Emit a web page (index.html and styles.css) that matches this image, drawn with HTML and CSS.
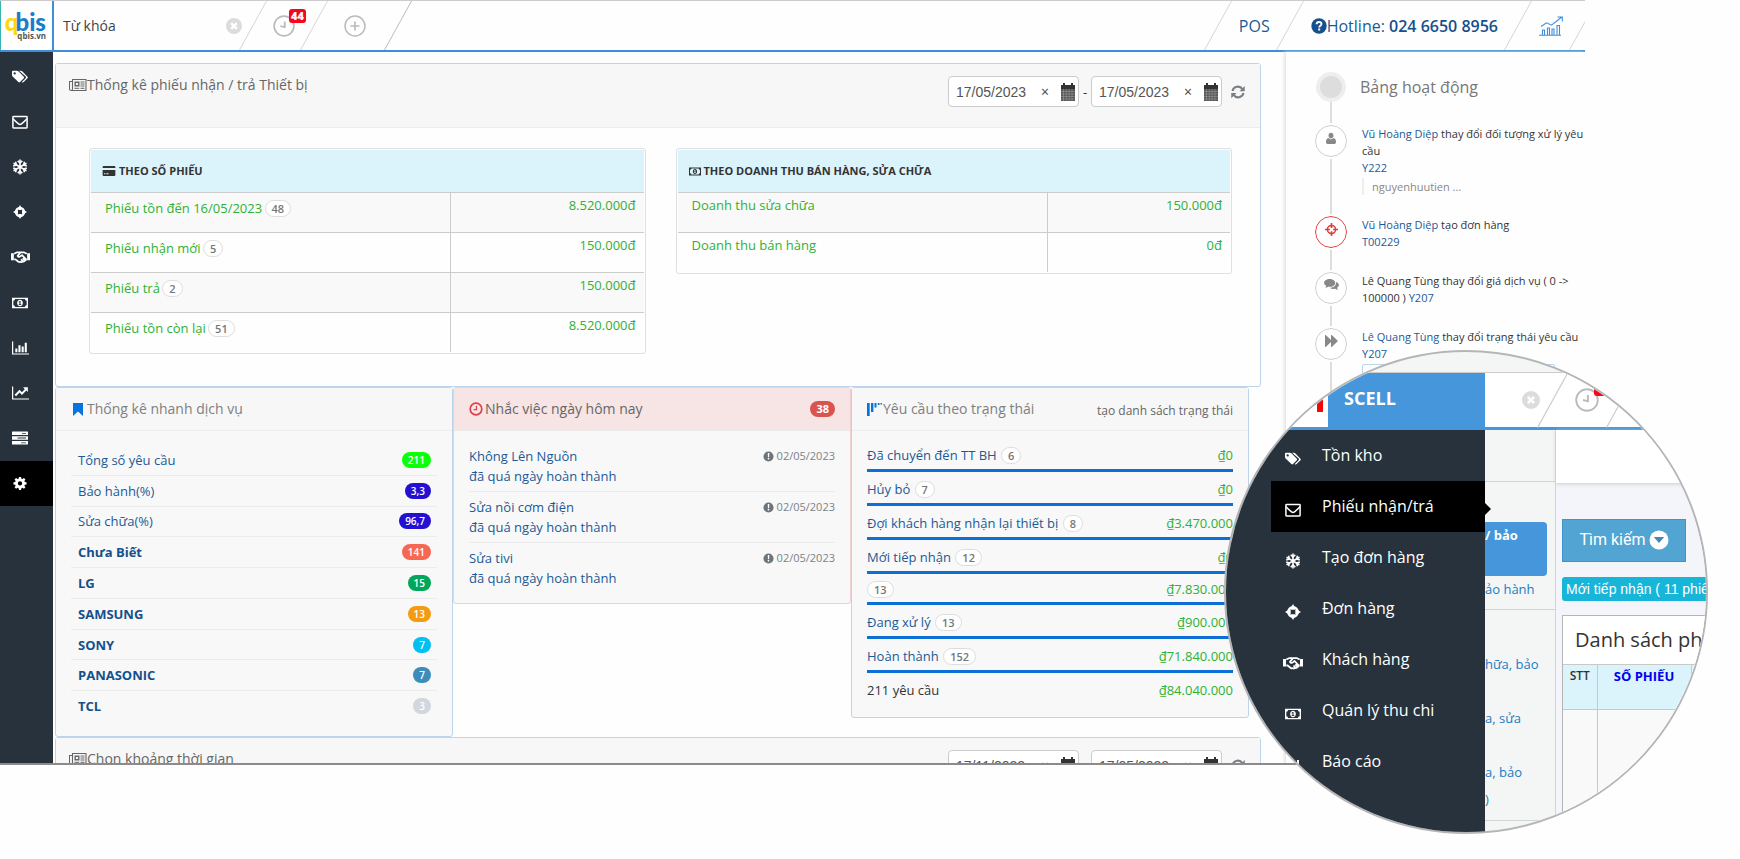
FILE: index.html
```html
<!DOCTYPE html>
<html lang="vi">
<head>
<meta charset="utf-8">
<title>Qbis</title>
<link rel="stylesheet" href="styles.css">
</head>
<body>
<svg class="defs" aria-hidden="true">
  <symbol id="i-tags" viewBox="0 0 18 16"><path fill="currentColor" fill-rule="evenodd" d="M0 2.200C0 1.500.5 1 1.200 1h4.300c.7 0 1.500.300 2 .8l5.800 5.800c.6.6.6 1.200 0 1.800l-4.300 4.300c-.6.6-1.200.6-1.800 0L1 7.800C.4 7.200 0 6.500 0 5.800zM3 2.700a1.300 1.300 0 1 0 0 2.600 1.300 1.300 0 0 0 0-2.600z"/><path fill="currentColor" d="M8 1h1.800c.7 0 1.500.3 2 .8l5.600 5.800c.6.6.6 1.200 0 1.800l-4.300 4.300c-.6.6-1.700.8-2.300.2l4.600-4.500c.5-.6.5-1.300 0-1.900z"/></symbol>
  <symbol id="i-mail" viewBox="0 0 16 16"><rect x=".9" y="2.400" width="14.200" height="11.500" rx=".6" fill="none" stroke="currentColor" stroke-width="1.500"/><path d="M1 4.800c2 2.200 4 3.800 5.500 5 1 .8 2 .8 3 0 1.500-1.200 3.500-2.800 5.500-5" fill="none" stroke="currentColor" stroke-width="1.500"/></symbol>
  <symbol id="i-snow" viewBox="0 0 16 16"><g fill="none" stroke="currentColor" stroke-width="1.600"><path d="M8 .5v15M1.500 4.250l13 7.500M14.500 4.250l-13 7.500"/><path d="M5.700 1.800L8 3.900l2.300-2.100M5.700 14.200L8 12.100l2.300 2.100M1.200 7l3.200-1-.9-3.200M14.800 7l-3.200-1 .9-3.200M1.200 9l3.200 1-.9 3.200M14.800 9l-3.200 1 .9 3.200"/></g></symbol>
  <symbol id="i-target" viewBox="0 0 16 16"><circle cx="8" cy="8" r="4.600" fill="none" stroke="currentColor" stroke-width="2.600"/><path fill="currentColor" d="M8 0l1.900 3.300v2.400H6.100V3.300zM8 16l1.900-3.300v-2.400H6.100v2.400zM0 8l3.300-1.900h2.400v3.800H3.300zM16 8l-3.300-1.900h-2.400v3.800h2.400z"/></symbol>
  <symbol id="i-cross" viewBox="0 0 16 16"><circle cx="8" cy="8" r="5" fill="none" stroke="currentColor" stroke-width="1.800"/><path fill="currentColor" d="M7 0h2v6H7zM7 10h2v6H7zM0 7h6v2H0zM10 7h6v2h-6z"/></symbol>
  <symbol id="i-hands" viewBox="0 0 20 14"><path fill="currentColor" d="M0 3h3v7.500H0zM17 3h3v7.500h-3z"/><path fill="none" stroke="currentColor" stroke-width="1.800" stroke-linejoin="round" d="M3.300 3.500L6 2.200h4L7 5.800c.7 1.600 2.400 1.400 3.600-.1l1-.7 4 4.300c.5.700-.3 1.700-1.100 1.200l-.5.900c-.5.700-1.300.6-1.700.2-.5 1-1.500 1.200-2.300.5-.9.600-1.800.3-2.600-.4L4.700 9.500H3.300M10 2.200h4l2.700 1.300M16.700 9.500h-1.500M10.500 9.500l1.800 2M12.300 8.300l1.700 2"/></symbol>
  <symbol id="i-money" viewBox="0 0 18 12"><path fill="currentColor" fill-rule="evenodd" d="M0 0h18v12H0zM3.500 1.500A2 2 0 0 1 1.500 3.500v5a2 2 0 0 1 2 2h11a2 2 0 0 1 2-2v-5a2 2 0 0 1-2-2z"/><path fill="currentColor" fill-rule="evenodd" d="M9 2.300c2 0 3.200 1.700 3.200 3.700S11 9.700 9 9.700 5.800 8 5.800 6 7 2.300 9 2.300zM8.500 3.700L7.300 4.800l.5.600.6-.4v2.500h-.9v.8h3v-.8h-.9V3.700z"/></symbol>
  <symbol id="i-bars" viewBox="0 0 18 14"><path fill="currentColor" d="M0 0h1.300v12.700H18V14H0zM3.500 7.500h2.200v4H3.500zM6.800 4h2.200v7.500H6.800zM10.200 5.500h2.200v6h-2.200zM13.500 1.500h2.200v10h-2.200z"/></symbol>
  <symbol id="i-line" viewBox="0 0 18 14"><path fill="currentColor" d="M0 0h1.300v12.700H18V14H0zM11.800 1h5v5l-1.600-1.600-4.700 4.700-2.500-2.500-3.700 3.900L2.700 8.900 8 3.600 10.500 6.100l3-3.200z"/></symbol>
  <symbol id="i-server" viewBox="0 0 16 13"><path fill="currentColor" fill-rule="evenodd" d="M.5 0h15c.3 0 .5.200.5.500v3H0v-3C0 .2.200 0 .5 0zM10 1.500v.8h4v-.8zM0 4.700h16v3.600H0zM5.500 6.100v.8H14v-.8zM0 9.500h16v3c0 .3-.2.500-.5.500H.5a.5.5 0 0 1-.5-.5zM9 10.900v.8h5v-.8z"/></symbol>
  <symbol id="i-cog" viewBox="0 0 16 16"><path fill="currentColor" fill-rule="evenodd" d="M6.800 1h2.400l.4 2 1.200.5 1.700-1.200 1.700 1.700L13 5.700l.5 1.200 2 .3v2.400l-2 .4-.5 1.200 1.200 1.700-1.700 1.700-1.700-1.200-1.200.5-.4 2H6.800l-.4-2-1.200-.5-1.700 1.200-1.700-1.700L3 11.200 2.500 10l-2-.4V7.200l2-.3L3 5.700 1.800 4l1.700-1.700 1.700 1.200L6.400 3zM8 5.900a2.500 2.500 0 1 0 0 5 2.500 2.500 0 0 0 0-5z"/></symbol>
  <symbol id="i-times" viewBox="0 0 16 16"><circle cx="8" cy="8" r="8" fill="currentColor"/><path d="M5.200 5.200l5.600 5.600M10.800 5.200l-5.600 5.600" stroke="#fff" stroke-width="2.400"/></symbol>
  <symbol id="i-clock" viewBox="0 0 22 22"><g fill="none" stroke="currentColor"><circle cx="11" cy="11" r="9.900" stroke-width="1.700"/><path d="M11.800 6.500v6.500M12.300 12.300l-5-1.300" stroke-width="1.800"/></g></symbol>
  <symbol id="i-plus" viewBox="0 0 22 22"><g fill="none" stroke="currentColor" stroke-width="1.500"><circle cx="11" cy="11" r="10"/><path d="M11 6.500v9M6.500 11h9" stroke-width="1.700"/></g></symbol>
  <symbol id="i-slash" viewBox="0 0 28 49"><path d="M27.500 0L.5 49" stroke="currentColor" fill="none"/></symbol>
  <symbol id="i-help" viewBox="0 0 16 16"><circle cx="8" cy="8" r="7.700" fill="currentColor"/><path d="M5.600 6.200C5.700 4.600 6.700 4 8 4c1.500 0 2.500.8 2.500 2 0 1.800-2.300 1.700-2.300 3.400" fill="none" stroke="#fff" stroke-width="1.900"/><path fill="#fff" d="M7.200 10.500h2v2h-2z"/></symbol>
  <symbol id="i-growth" viewBox="0 0 24 20"><g fill="none" stroke="currentColor" stroke-width="1.100"><path d="M0 19.300h22M3.500 19v-5h2v5M8.500 19v-7h2v7M13 19v-6h2v6M18 19V9.500h2.500V19"/><path d="M2 10.500l5.500-3.700 5 2.400L22.500 1.200M18.500 1h4.800v4.500"/></g></symbol>
  <symbol id="i-news" viewBox="0 0 18 14"><g fill="none" stroke="currentColor"><path d="M3.500 1.500h13.500v11H2c-1 0-1.500-.5-1.500-1.500V3.500h3zM3.500 3.500V11c0 1-.6 1.500-1.500 1.500" stroke-width="1.100"/><path d="M6.200 4.200h3.600v3.600H6.200z" stroke-width="1.400"/><path d="M11.500 4h4M11.500 6h4M11.500 8h4M5.500 10.300h4.800M11.500 10.300h4" stroke-width="1"/></g></symbol>
  <symbol id="i-card" viewBox="0 0 14 11"><path fill="currentColor" fill-rule="evenodd" d="M1 0h12c.6 0 1 .4 1 1v1.200H0V1c0-.6.4-1 1-1zM0 4.500h14V10c0 .6-.4 1-1 1H1c-.6 0-1-.4-1-1zM1.500 8v1h1.500V8zM4 8v1h2.500V8z"/></symbol>
  <symbol id="i-cal" viewBox="0 0 16 18"><path fill="#333" d="M3 0h2v2h6V0h2v2h2v4H1V2h2z"/><path fill="#555" d="M1 6h14v12H1z"/><path d="M1 8.500h14M1 11h14M1 13.500h14M1 16h14M3.500 6v12M6.300 6v12M9.100 6v12M12 6v12" stroke="#999" stroke-width=".6"/></symbol>
  <symbol id="i-refresh" viewBox="0 0 16 16"><g fill="none" stroke="currentColor" stroke-width="2.400"><path d="M1.700 6.800A6.300 6.300 0 0 1 13 4.600M14.300 9.200A6.300 6.300 0 0 1 3 11.400"/></g><path fill="currentColor" d="M15.700 1v6H9.700zM.3 15V9h6z"/></symbol>
  <symbol id="i-bookmark" viewBox="0 0 10 13"><path fill="currentColor" d="M0 0h10v13L5 8.500 0 13z"/></symbol>
  <symbol id="i-oclock" viewBox="0 0 14 14"><g fill="none" stroke="currentColor"><circle cx="7" cy="7" r="5.800" stroke-width="1.700"/><path d="M7.500 3.700v4H4.700" stroke-width="1.200"/></g></symbol>
  <symbol id="i-alert" viewBox="0 0 12 12"><circle cx="6" cy="6" r="5.500" fill="currentColor"/><path fill="#fff" d="M5.200 2.300h1.700l-.2 4.400H5.400zM5.200 7.700h1.600v1.600H5.200z"/></symbol>
  <symbol id="i-funnel" viewBox="0 0 16 13"><path fill="currentColor" d="M0 0h2.700v13H0zM4 0h2.400v9H4zM7.500 0h2v4.500h-2zM10.800 0h1.700v2h-1.700zM13.500 0H15v1.500h-1.500z"/></symbol>
  <symbol id="i-user" viewBox="0 0 12 14"><path fill="currentColor" d="M6 0c1.700 0 3 1.500 3 3.500S7.700 7 6 7 3 5.500 3 3.500 4.300 0 6 0zM3 6.500c1 1.200 2 1.500 3 1.500s2-.3 3-1.500c2 .3 3 2 3 5 0 1-.8 2-2 2H2c-1.200 0-2-1-2-2 0-3 1-4.700 3-5z"/></symbol>
  <symbol id="i-chat" viewBox="0 0 16 13"><path fill="currentColor" d="M6 0c3.300 0 6 1.800 6 4.200S9.300 8.500 6 8.500c-.6 0-1.200 0-1.700-.2-.9.700-2 1-3 1.100.6-.6 1-1.200 1-2C.9 6.600 0 5.500 0 4.200 0 1.800 2.700 0 6 0z"/><path fill="currentColor" d="M13 3.200c1.800.7 3 1.900 3 3.400 0 1.200-.8 2.200-2 3 .1.900.5 1.500 1.200 2.200-1.200 0-2.300-.5-3.200-1.200-2.300.4-4.500-.1-5.800-1.200 4 0 7-2.200 6.800-6.200z"/></symbol>
  <symbol id="i-fwd" viewBox="0 0 13 12"><path fill="currentColor" d="M0 0l1 .2L6 5V0l1 .2L13 6l-6 5.800L6 12V7l-5 4.800L0 12z"/></symbol>
  <symbol id="i-down" viewBox="0 0 20 20"><circle cx="10" cy="10" r="9.500" fill="#fff"/><path fill="#4a86b5" d="M4.800 7h10.400L10 13z"/></symbol>
</svg>

<div class="app">
  <header class="topbar">
    <a class="logo" href="#"><span class="logo-name"><b>q</b>bis</span><span class="logo-site">qbis.vn</span></a>
    <form class="search">
      <input type="text" aria-label="Từ khóa" placeholder="Từ khóa">
      <button type="reset" aria-label="Xóa"><svg class="ic16"><use href="#i-times"/></svg></button>
    </form>
    <svg class="slash"><use href="#i-slash"/></svg>
    <button class="top-btn top-clock" aria-label="Nhắc việc"><svg class="ic22"><use href="#i-clock"/></svg><span class="count">44</span></button>
    <svg class="slash"><use href="#i-slash"/></svg>
    <button class="top-btn top-plus" aria-label="Thêm"><svg class="ic22"><use href="#i-plus"/></svg></button>
    <svg class="slash slash-dark"><use href="#i-slash"/></svg>
    <div class="spacer"></div>
    <svg class="slash"><use href="#i-slash"/></svg>
    <a class="top-link" href="#">POS</a>
    <svg class="slash"><use href="#i-slash"/></svg>
    <a class="top-link hotline" href="#"><svg class="ic16"><use href="#i-help"/></svg><span>Hotline: <b>024 6650 8956</b></span></a>
    <svg class="slash"><use href="#i-slash"/></svg>
    <a class="top-link growth" href="#" aria-label="Báo cáo"><svg class="ic-growth"><use href="#i-growth"/></svg></a>
    <svg class="slash slash-end"><use href="#i-slash"/></svg>
  </header>

  <div class="body">
    <nav class="side">
      <ul>
        <li><a href="#" aria-label="Tồn kho"><svg><use href="#i-tags"/></svg></a></li>
        <li><a href="#" aria-label="Phiếu"><svg><use href="#i-mail"/></svg></a></li>
        <li><a href="#" aria-label="Tạo đơn"><svg><use href="#i-snow"/></svg></a></li>
        <li><a href="#" aria-label="Đơn hàng"><svg class="small"><use href="#i-target"/></svg></a></li>
        <li><a href="#" aria-label="Khách hàng"><svg class="wide"><use href="#i-hands"/></svg></a></li>
        <li><a href="#" aria-label="Thu chi"><svg><use href="#i-money"/></svg></a></li>
        <li><a href="#" aria-label="Báo cáo"><svg class="chart"><use href="#i-bars"/></svg></a></li>
        <li><a href="#" aria-label="Thống kê"><svg class="chart"><use href="#i-line"/></svg></a></li>
        <li><a href="#" aria-label="Dữ liệu"><svg><use href="#i-server"/></svg></a></li>
        <li class="on"><a href="#" aria-label="Cài đặt"><svg class="small"><use href="#i-cog"/></svg></a></li>
      </ul>
    </nav>

    <main class="main">
      <section class="panel">
        <div class="panel-head tall">
          <h2><svg class="ic-news"><use href="#i-news"/></svg>Thống kê phiếu nhận / trả Thiết bị</h2>
          <div class="range">
            <div class="date"><input type="text" aria-label="Từ ngày" value="17/05/2023"><button aria-label="Xóa ngày">×</button><svg><use href="#i-cal"/></svg></div>
            <span class="dash">-</span>
            <div class="date"><input type="text" aria-label="Đến ngày" value="17/05/2023"><button aria-label="Xóa ngày">×</button><svg><use href="#i-cal"/></svg></div>
            <button class="refresh" aria-label="Tải lại"><svg><use href="#i-refresh"/></svg></button>
          </div>
        </div>
        <div class="tables">
          <div class="frame">
            <table>
              <thead><tr><th colspan="2"><svg class="ic-card"><use href="#i-card"/></svg>THEO SỐ PHIẾU</th></tr></thead>
              <tbody>
                <tr><td class="pilled">Phiếu tồn đến 16/05/2023 <span class="pill">48</span></td><td class="num">8.520.000đ</td></tr>
                <tr><td class="pilled">Phiếu nhận mới <span class="pill">5</span></td><td class="num">150.000đ</td></tr>
                <tr><td class="pilled">Phiếu trả <span class="pill">2</span></td><td class="num">150.000đ</td></tr>
                <tr><td class="pilled">Phiếu tồn còn lại <span class="pill">51</span></td><td class="num">8.520.000đ</td></tr>
              </tbody>
            </table>
          </div>
          <div class="frame">
            <table>
              <thead><tr><th colspan="2"><svg class="ic-cash"><use href="#i-money"/></svg>THEO DOANH THU BÁN HÀNG, SỬA CHỮA</th></tr></thead>
              <tbody>
                <tr><td>Doanh thu sửa chữa</td><td class="num narrow">150.000đ</td></tr>
                <tr><td>Doanh thu bán hàng</td><td class="num narrow">0đ</td></tr>
              </tbody>
            </table>
          </div>
        </div>
      </section>

      <div class="trio">
        <section class="panel gray">
          <div class="panel-head"><h2 class="light"><svg class="ic-mark"><use href="#i-bookmark"/></svg>Thống kê nhanh dịch vụ</h2></div>
          <ul class="quick">
            <li><a href="#">Tổng số yêu cầu</a><span class="tag lime">211</span></li>
            <li><a href="#">Bảo hành(%)</a><span class="tag navy">3,3</span></li>
            <li><a href="#">Sửa chữa(%)</a><span class="tag navy">96,7</span></li>
            <li><a href="#"><b>Chưa Biết</b></a><span class="tag coral">141</span></li>
            <li><a href="#"><b>LG</b></a><span class="tag green">15</span></li>
            <li><a href="#"><b>SAMSUNG</b></a><span class="tag orange">13</span></li>
            <li><a href="#"><b>SONY</b></a><span class="tag cyan">7</span></li>
            <li><a href="#"><b>PANASONIC</b></a><span class="tag blue">7</span></li>
            <li><a href="#"><b>TCL</b></a><span class="tag pale">3</span></li>
          </ul>
        </section>

        <section class="panel gray alert">
          <div class="panel-head"><h2><svg class="ic-oclock"><use href="#i-oclock"/></svg>Nhắc việc ngày hôm nay</h2><span class="tag red">38</span></div>
          <ul class="todo">
            <li><a href="#">Không Lên Nguồn<br>đã quá ngày hoàn thành</a><time><svg><use href="#i-alert"/></svg>02/05/2023</time></li>
            <li><a href="#">Sửa nồi cơm điện<br>đã quá ngày hoàn thành</a><time><svg><use href="#i-alert"/></svg>02/05/2023</time></li>
            <li><a href="#">Sửa tivi<br>đã quá ngày hoàn thành</a><time><svg><use href="#i-alert"/></svg>02/05/2023</time></li>
          </ul>
        </section>

        <section class="panel gray">
          <div class="panel-head"><h2 class="light"><svg class="ic-funnel"><use href="#i-funnel"/></svg>Yêu cầu theo trạng thái</h2><a class="make" href="#">tạo danh sách trạng thái</a></div>
          <ul class="status">
            <li><a href="#">Đã chuyển đến TT BH <span class="pill">6</span></a><span class="num">₫0</span></li>
            <li><a href="#">Hủy bỏ <span class="pill">7</span></a><span class="num">₫0</span></li>
            <li><a href="#">Đợi khách hàng nhận lại thiết bị <span class="pill">8</span></a><span class="num">₫3.470.000</span></li>
            <li><a href="#">Mới tiếp nhận <span class="pill">12</span></a><span class="num">₫0</span></li>
            <li class="bare"><a href="#"><span class="pill">13</span></a><span class="num">₫7.830.000</span></li>
            <li><a href="#">Đang xử lý <span class="pill">13</span></a><span class="num">₫900.000</span></li>
            <li><a href="#">Hoàn thành <span class="pill">152</span></a><span class="num">₫71.840.000</span></li>
            <li class="total"><span>211 yêu cầu</span><span class="num">₫84.040.000</span></li>
          </ul>
        </section>
      </div>

      <section class="panel">
        <div class="panel-head tall">
          <h2><svg class="ic-news"><use href="#i-news"/></svg>Chọn khoảng thời gian</h2>
          <div class="range">
            <div class="date"><input type="text" aria-label="Từ ngày" value="17/11/2022"><button aria-label="Xóa ngày">×</button><svg><use href="#i-cal"/></svg></div>
            <span class="dash">-</span>
            <div class="date"><input type="text" aria-label="Đến ngày" value="17/05/2023"><button aria-label="Xóa ngày">×</button><svg><use href="#i-cal"/></svg></div>
            <button class="refresh" aria-label="Tải lại"><svg><use href="#i-refresh"/></svg></button>
          </div>
        </div>
      </section>
    </main>

    <aside class="feed">
      <h3><span class="dot"></span>Bảng hoạt động</h3>
      <ol>
        <li><span class="node"><svg class="ic-user"><use href="#i-user"/></svg></span><div class="say tall-say"><p><a href="#">Vũ Hoàng Diệp</a> thay đổi đối tượng xử lý yêu cầu<br><a href="#">Y222</a></p><blockquote>nguyenhuutien ...</blockquote></div></li>
        <li><span class="node hot"><svg class="ic-cross"><use href="#i-cross"/></svg></span><div class="say"><p><a href="#">Vũ Hoàng Diệp</a> tạo đơn hàng<br><a href="#">T00229</a></p></div></li>
        <li><span class="node"><svg class="ic-chat"><use href="#i-chat"/></svg></span><div class="say"><p>Lê Quang Tùng thay đổi giá dịch vụ ( 0 -&gt; 100000 ) <a href="#">Y207</a></p></div></li>
        <li><span class="node"><svg class="ic-fwd"><use href="#i-fwd"/></svg></span><div class="say"><p><a href="#">Lê Quang Tùng</a> thay đổi trạng thái yêu cầu <a href="#">Y207</a></p><div class="state"></div></div></li>
      </ol>
    </aside>
  </div>
</div>

<div class="lens">
  <div class="lens-top">
    <span class="lens-logo"></span>
    <strong class="lens-brand">SCELL</strong>
    <svg class="lens-times"><use href="#i-times"/></svg>
    <svg class="lens-slash"><use href="#i-slash"/></svg>
    <span class="lens-clock"><svg><use href="#i-clock"/></svg><i></i></span>
    <svg class="lens-slash"><use href="#i-slash"/></svg>
  </div>
  <div class="lens-body">
    <nav class="lens-nav">
      <a href="#"><svg><use href="#i-tags"/></svg>Tồn kho</a>
      <a class="on" href="#"><svg><use href="#i-mail"/></svg>Phiếu nhận/trá</a>
      <a href="#"><svg><use href="#i-snow"/></svg>Tạo đơn hàng</a>
      <a href="#"><svg><use href="#i-target"/></svg>Đơn hàng</a>
      <a href="#"><svg class="wide"><use href="#i-hands"/></svg>Khách hàng</a>
      <a href="#"><svg><use href="#i-money"/></svg>Quán lý thu chi</a>
      <a href="#"><svg><use href="#i-bars"/></svg>Báo cáo</a>
    </nav>
    <div class="lens-sub">
      <div class="sub-blank"></div>
      <div class="sub-group"><a class="on" href="#">/ bảo</a><a href="#">ảo hành</a></div>
      <div class="sub-group second"><a href="#">hữa, bảo</a><a href="#">a, sửa</a><a href="#">a, bảo<br>)</a></div>
    </div>
    <div class="lens-main">
      <div class="lens-strip"></div>
      <button class="find">Tìm kiếm<svg><use href="#i-down"/></svg></button>
      <span class="fresh">Mới tiếp nhận ( 11 phiếu )</span>
      <div class="slips">
        <h4>Danh sách phiếu</h4>
        <table>
          <tr><th class="stt">STT</th><th class="code">SỐ PHIẾU</th><th></th></tr>
          <tr><td></td><td></td><td></td></tr>
        </table>
      </div>
    </div>
  </div>
</div>
</body>
</html>
```

FILE: styles.css
```css
* { box-sizing: border-box; }
body {
  margin: 0;
  position: relative;
  min-height: 100vh;
  overflow: hidden;
  background: #fefefe;
  color: #333;
  font: 13px/18px "Open Sans", "Noto Sans", sans-serif;
}
a { color: #1b5a96; text-decoration: none; }
ul, ol { list-style: none; margin: 0; padding: 0; }
h2, h3, h4, p, blockquote { margin: 0; font-weight: 400; }
button { border: 0; padding: 0; background: none; font: inherit; cursor: pointer; }
svg { flex: none; }
.defs { position: absolute; width: 0; height: 0; }

.app {
  width: calc(100% - 155px);
  height: calc(100vh - 94px);
  overflow: hidden;
  display: flex;
  flex-direction: column;
  border-top: 1px solid #ccc;
  border-bottom: 2px solid #8d8a8c;
}

/* Top bar */
.topbar {
  display: flex;
  align-items: center;
  flex: none;
  height: 51px;
  border-bottom: 2px solid #3d8fdb;
  overflow: hidden;
}
.logo {
  display: flex;
  flex-direction: column;
  align-items: flex-end;
  justify-content: center;
  width: 54px;
  height: 49px;
  padding-right: 6px;
  border-left: 1px solid #35b5b5;
  border-right: 2px solid #3d8fdb;
}
.logo-name { font: 900 24px/21px Lato, sans-serif; color: #1b7cc9; }
.logo-name b { margin-right: -3px; color: #fbd90d; }
.logo-site { font: 700 8px/8px "Open Sans", sans-serif; color: #555; }
.search { display: flex; align-items: center; width: 188px; }
.search input {
  flex: 1;
  min-width: 0;
  height: 46px;
  padding: 0 9px;
  border: 0;
  background: none;
  font: 14px "Open Sans", sans-serif;
}
.search input::placeholder { color: #444; opacity: 1; }
.search button { display: flex; color: #dcdcdc; }
.ic16 { width: 16px; height: 16px; }
.ic22 { width: 22px; height: 22px; }
.slash { width: 28px; height: 49px; color: #d5d5d5; }
.search + .slash { margin-left: -3px; }
.slash-dark { color: #bbb; }
.slash-end { margin-right: -12px; }
.top-btn { position: relative; display: flex; justify-content: center; color: #bbb; }
.top-clock { width: 33px; }
.top-plus { width: 56px; }
.top-plus svg { margin-right: 2px; }
.count {
  position: absolute;
  left: 22px;
  top: -6px;
  padding: 0 2px;
  border-radius: 3px;
  background: #f8071c;
  color: #fff;
  font: 800 11px/14px "Open Sans", sans-serif;
}
.spacer { flex: 1; }
.top-link { display: flex; align-items: center; padding: 0 6px 0 7px; font-size: 16px; }
.hotline b { color: #15508c; font-weight: 600; }
.hotline .ic16 { color: #15508c; }
.growth { color: #3d8fdb; }
.ic-growth { width: 24px; height: 20px; }

.body { display: flex; flex: 1; min-height: 0; }

/* Side bar */
.side { width: 53px; background: #28323c; flex: none; }
.side ul { display: flex; flex-direction: column; height: 454px; padding-top: 2px; }
.side li { flex: 1; display: flex; }
.side a { flex: 1; display: flex; align-items: center; justify-content: center; padding-right: 13px; color: #fff; }
.side svg { width: 16px; height: 16px; }
.side .small { width: 14px; height: 14px; }
.side .chart { width: 17px; }
.side .wide { width: 19px; }
.side .on { background: #000; }

/* Panels */
.main { flex: 1; min-width: 0; padding: 11px 24px 0 2px; }
.panel { border: 1px solid #bcd4ec; border-radius: 3px; }
.gray { background: #f8f8f8; }
.panel-head {
  display: flex;
  justify-content: space-between;
  align-items: center;
  min-height: 43px;
  padding: 0 15px;
  border-bottom: 1px solid #ececec;
  background: #f7f7f7;
}
.panel-head.tall { align-items: flex-start; padding: 12px 15px 20px 13px; }
h2 { display: flex; align-items: center; font-size: 14px; line-height: 18px; color: #666; }
h2.light { color: #808080; }
.ic-news { width: 18px; height: 14px; }
.ic-mark { width: 10px; height: 13px; margin: 0 4px 0 2px; color: #0773de; }
.ic-oclock { width: 14px; height: 14px; margin-right: 2px; color: #d9424a; }
.ic-funnel { width: 16px; height: 13px; color: #0773de; }
.range { display: flex; align-items: center; }
.date {
  display: flex;
  align-items: center;
  width: 131px;
  height: 31px;
  padding: 0 2px 0 7px;
  border: 1px solid #ccc;
  border-radius: 4px;
  background: #fff;
}
.date input { flex: 1; min-width: 0; padding: 0; border: 0; font: 14px "Liberation Sans", sans-serif; color: #555; }
.date button { width: 16px; margin-right: 7px; font-size: 14px; color: #444; }
.date svg { width: 16px; height: 18px; }
.dash { width: 12px; text-align: center; }
.refresh { display: flex; margin-left: 9px; color: #777f85; }
.refresh svg { width: 14px; height: 14px; }

.tables { display: grid; grid-template-columns: 1fr 1fr; gap: 30px; align-items: start; padding: 20px 28px 32px 33px; }
.frame { padding: 1px; border: 1px solid #e0e0e0; border-radius: 3px; }
.frame table { width: 100%; border-collapse: collapse; }
.frame th {
  height: 42px;
  padding: 0 11px;
  background: #dbf4fc;
  text-align: left;
  font-size: 11px;
  font-weight: 700;
}
.frame th svg { vertical-align: -1px; margin-right: 3px; }
.ic-card { width: 14px; height: 10px; }
.ic-cash { width: 12px; height: 9px; }
.frame td { height: 40px; padding: 3px 8px 0 14px; vertical-align: top; border-top: 1px solid #ccc; color: #2eb135; }
.frame td.pilled { padding-top: 6px; }
.frame td.num { width: 35%; border-left: 1px solid #ccc; text-align: right; }
.frame td.narrow { width: 33%; }
.frame tbody tr:nth-child(odd) { background: #f9f9f9; }
.pill {
  display: inline-block;
  padding: 0 6px;
  border: 1px solid #ddd;
  border-radius: 9px;
  background: #fff;
  color: #777;
  font-size: 11px;
  font-weight: 600;
  line-height: 15px;
}
.pilled .pill { margin-left: -1px; }

.trio { display: flex; align-items: flex-start; padding-right: 12px; }
.trio .panel { flex: 1; min-width: 0; }
.quick { display: flex; flex-direction: column; min-height: 305px; padding: 14px 15px 15px; }
.quick li { flex: 1; display: flex; justify-content: space-between; align-items: center; padding: 0 6px 0 7px; border-bottom: 1px solid #ececec; }
.quick li:last-child { border: 0; }
.quick b { color: #15508c; font-weight: 700; }
.tag { padding: 0 6px; border-radius: 8px; color: #fff; font-size: 10px; font-weight: 600; line-height: 16px; }
.lime { background: #0bff0b; }
.navy { background: #2410d0; }
.coral { background: #f56954; }
.green { background: #00a65a; }
.orange { background: #f39c12; }
.cyan { background: #00c0ef; }
.blue { background: #3c8dbc; }
.pale { background: #d2d6de; }
.red { background: #d9534f; font-size: 11px; font-weight: 700; }

.alert { border-color: #efcfd1; }
.alert .panel-head { background: #f7e4e5; }
.todo { padding: 10px 15px 10px; }
.todo li { display: flex; justify-content: space-between; padding: 5px 0; border-bottom: 1px solid #ececec; line-height: 20px; }
.todo li:last-child { border: 0; }
.todo time { display: flex; align-items: center; gap: 3px; height: 20px; font-size: 11px; color: #7b8288; }
.todo svg { width: 11px; height: 11px; color: #6d757c; }

.make { padding-top: 4px; font-size: 12px; color: #666; }
.status { padding: 15px 15px 10px; }
.status li { display: flex; justify-content: space-between; align-items: flex-start; height: 34px; padding-top: 8px; border-bottom: 3px solid #0b6fd6; }
.status li:first-child { height: 26px; padding: 0; }
.status .bare { height: 31px; padding-top: 6px; }
.status .total { border: 0; }
.status .pill { margin-left: 1px; }
.status .bare .pill { margin-left: 0; }
.status .num { color: #2eb135; }

/* Activity feed */
.feed { width: 300px; flex: none; padding: 20px 0 0 30px; border-left: 1px solid #e8e8e8; box-shadow: -1px 0 3px #e4e4e4; overflow: hidden; }
.feed h3 { display: flex; align-items: center; gap: 14px; font-size: 16px; line-height: 30px; color: #777; }
.dot { width: 30px; height: 30px; border: 4px solid #eee; border-radius: 50%; background: #ddd; }
.feed ol { position: relative; padding-top: 23px; }
.feed ol::before { content: ""; position: absolute; left: 14px; top: 0; bottom: 0; width: 2px; background: #ddd; }
.feed li { position: relative; display: flex; gap: 15px; margin-left: -1px; margin-bottom: 18px; }
.node {
  display: flex;
  align-items: center;
  justify-content: center;
  flex: none;
  width: 32px;
  height: 32px;
  padding-bottom: 6px;
  border: 1px solid #ccc;
  border-radius: 50%;
  background: #fff;
  color: #888;
  outline: 2px solid #fefefe;
}
.hot { border-color: #e53935; color: #e53935; }
.ic-user { width: 10px; height: 13px; }
.ic-cross { width: 13px; height: 13px; }
.ic-chat { width: 15px; height: 12px; }
.ic-fwd { width: 13px; height: 12px; }
.say { flex: none; width: 240px; min-height: 38px; font-size: 11px; line-height: 17px; }
.tall-say { min-height: 73px; }
.say blockquote { margin-top: 2px; padding-left: 8px; border-left: 2px solid #eee; color: #888; }
.state { width: 193px; height: 30px; margin-top: 2px; border: 1px solid #bcd4ec; border-radius: 2px; }

/* Magnified menu */
.lens {
  position: absolute;
  right: 32px;
  top: 350px;
  width: 484px;
  height: 484px;
  padding-top: 20px;
  overflow: hidden;
  border: 2px solid #b5b5b5;
  border-radius: 50%;
  background: #f4f6f6;
}
.lens-top { display: flex; align-items: center; height: 58px; background: #fff; border-top: 1px solid #ccc; border-bottom: 3px solid #4596db; }
.lens-logo { width: 102px; height: 54px; flex: none; border-right: 5px solid #fff; background: linear-gradient(#f30808, #f30808) right 26px / 6px 13px no-repeat; }
.lens-brand { width: 157px; height: 54px; flex: none; padding-left: 16px; background: #4596db; color: #fff; font-size: 18px; line-height: 50px; }
.lens-times { width: 18px; height: 18px; margin-left: 37px; margin-right: -3px; color: #dcdcdc; }
.lens-slash { width: 31px; height: 55px; color: #ccc; }
.lens-clock { position: relative; width: 38px; height: 24px; padding-left: 7px; color: #bbb; }
.lens-clock svg { width: 24px; height: 24px; }
.lens-clock i { position: absolute; left: 26px; top: -8px; width: 20px; height: 16px; border-radius: 3px; background: #f8071c; }
.lens-body { display: flex; height: 420px; }
.lens-nav { width: 259px; flex: none; background: #28323c; }
.lens-nav a { position: relative; display: flex; align-items: center; gap: 20px; height: 51px; margin-left: 45px; padding: 0 0 2px 14px; color: #fff; font-size: 16px; }
.lens-nav svg { width: 16px; height: 16px; margin: 9px 1px 0 0; }
.lens-nav .wide { width: 20px; margin: 9px -1px 0 -2px; }
.lens-nav .on { background: #000; }
.lens-nav .on::after { content: ""; position: absolute; left: 100%; top: 22px; border: 6px solid transparent; border-left-color: #000; border-right: 0; }
.lens-sub { width: 71px; flex: none; border-right: 1px solid #d2d5d6; overflow: hidden; white-space: nowrap; }
.sub-blank { height: 52px; border-bottom: 1px solid #d2d5d6; }
.sub-group { display: flex; flex-direction: column; height: 128px; padding: 40px 8px 0 0; border-bottom: 1px solid #d2d5d6; }
.sub-group a { color: #1b7cc4; font-size: 13px; line-height: 27px; }
.sub-group .on { height: 54px; border-radius: 0 4px 4px 0; background: #4596db; color: #fff; font-weight: 700; }
.sub-group.second { height: 211px; padding-top: 41px; gap: 27px; }
.lens-main { flex: 1; min-width: 0; display: flex; flex-direction: column; align-items: flex-start; padding-left: 6px; background: #f4f5fa; white-space: nowrap; font-family: Roboto, sans-serif; }
.lens-strip { align-self: stretch; height: 53px; margin-left: -6px; flex: none; background: #fff; box-shadow: 0 1px 4px #ccc; }
.find { display: flex; align-items: center; justify-content: center; gap: 3px; width: 124px; height: 48px; margin-top: 36px; border: 1px solid #3f93c9; background: #52a4d3; color: #fff; font-size: 16px; }
.find svg { width: 20px; height: 20px; }
.fresh { margin-top: 15px; padding: 0 4px; border-radius: 3px; background: #17b6d8; color: #fff; font-family: "Liberation Sans", sans-serif; font-size: 14px; line-height: 24px; }
.slips { width: 180px; margin-top: 14px; border: 1px solid #b5b5b5; background: #fff; font-family: "Open Sans", sans-serif; }
.slips h4 { padding-left: 12px; font-size: 20px; line-height: 48px; }
.slips table { width: 100%; border-collapse: collapse; table-layout: fixed; }
.slips th { height: 45px; padding: 2px 0; border: 1px solid #c9c9c9; border-left: 0; background: #dbf4fc; vertical-align: top; font-size: 12px; font-weight: 600; }
.slips td { height: 140px; border-right: 1px solid #c9c9c9; background: #f9f9f9; }
.slips .stt { width: 34px; }
.slips .code { width: 94px; color: #0000f0; font-size: 13px; font-weight: 700; }
```
